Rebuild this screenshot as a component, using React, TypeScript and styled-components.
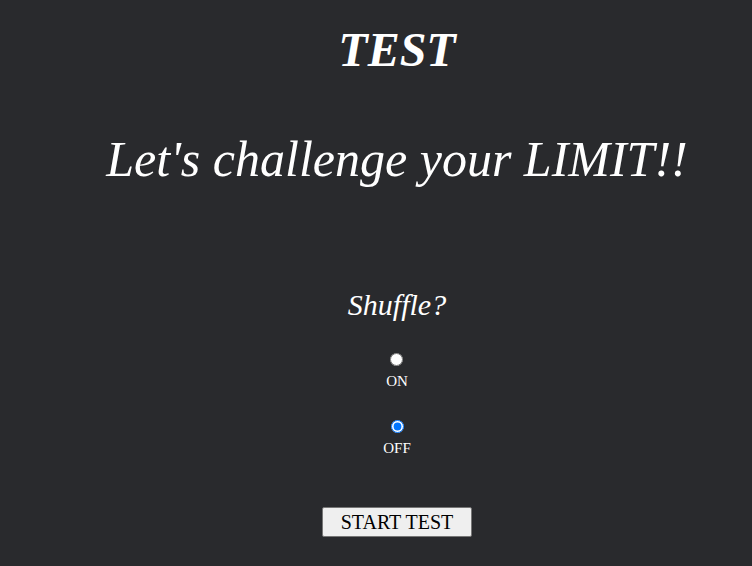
import React, { useState } from 'react';
import styled, { createGlobalStyle } from 'styled-components';

const GlobalStyle = createGlobalStyle`
    html, body {
        margin: 0;
        padding: 0;
        background: #292a2d;
    }
`;

const Page = styled.main`
    width: 100%;
    min-height: 566px;
    padding: 22px 0 0 42px;
    box-sizing: border-box;
    display: flex;
    flex-direction: column;
    align-items: center;
    color: #ffffff;
    font-family: 'Liberation Serif', 'Times New Roman', serif;
    text-align: center;
`;

const Title = styled.h1`
    margin: 0;
    font-size: 48px;
    line-height: 55px;
    font-style: italic;
    font-weight: bold;
`;

const Slogan = styled.h2`
    margin: 54px 0 0;
    font-size: 50px;
    line-height: 56px;
    font-style: italic;
    font-weight: normal;
    white-space: nowrap;
`;

const Question = styled.p`
    margin: 101px 0 0;
    font-size: 30px;
    line-height: 34px;
    font-style: italic;
`;

const Options = styled.div`
    display: flex;
    flex-direction: column;
    align-items: center;
    gap: 31px;
    margin-top: 31px;
`;

const Option = styled.label`
    display: flex;
    flex-direction: column;
    align-items: center;
    font-size: 15px;
    line-height: 15px;
    cursor: pointer;

    input {
        width: 13px;
        height: 13px;
        margin: 0 0 8px;
        accent-color: #0075ff;
    }
`;

const StartButton = styled.button`
    margin-top: 51px;
    width: 150px;
    height: 30px;
    padding: 1px 6px;
    font-family: 'Liberation Serif', 'Times New Roman', serif;
    font-size: 20px;
    color: #000000;
    background: #efefef;
    border: 1px solid #767676;
    border-radius: 2px;
`;

export default function App() {
    const [shuffle, setShuffle] = useState(false);

    return (
        <>
            <GlobalStyle />
            <Page>
                <Title>TEST</Title>
                <Slogan>Let's challenge your LIMIT!!</Slogan>
                <Question>Shuffle?</Question>
                <Options>
                    <Option>
                        <input
                            type="radio"
                            name="shuffle"
                            checked={shuffle}
                            onChange={() => setShuffle(true)}
                        />
                        ON
                    </Option>
                    <Option>
                        <input
                            type="radio"
                            name="shuffle"
                            checked={!shuffle}
                            onChange={() => setShuffle(false)}
                        />
                        OFF
                    </Option>
                </Options>
                <StartButton>START TEST</StartButton>
            </Page>
        </>
    );
}
